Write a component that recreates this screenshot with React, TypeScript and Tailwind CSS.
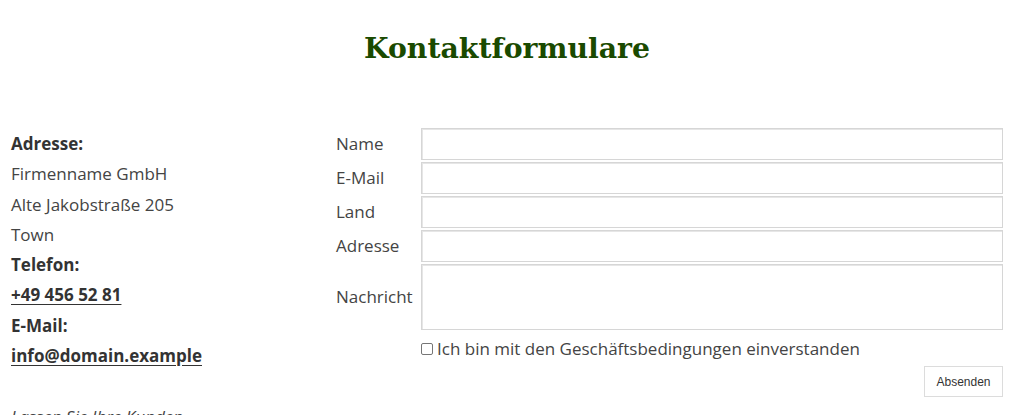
import React from "react";

export default function App() {
  const body = { fontFamily: '"Open Sans", sans-serif' };
  const rows = ["Name", "E-Mail", "Land", "Adresse"];
  return (
    <div className="w-[1024px] h-[415px] overflow-hidden bg-white text-[#444] text-[17px]" style={body}>
      <h1
        className="pt-[28px] pr-[10px] text-center text-[28.3px] font-bold leading-[40px] text-[#1a4a00]"
        style={{ fontFamily: '"DejaVu Serif", Georgia, serif' }}
      >
        Kontaktformulare
      </h1>
      <div className="mt-[60px] flex">
        <div className="w-[336px] shrink-0 pl-[11px] pt-[1px] leading-[30.3px]">
          <div className="font-bold text-[#333]">Adresse:</div>
          <div>Firmenname GmbH</div>
          <div>Alte Jakobstraße 205</div>
          <div>Town</div>
          <div className="font-bold text-[#333]">Telefon:</div>
          <div className="font-bold text-[#333] underline underline-offset-[3px]">+49 456 52 81</div>
          <div className="font-bold text-[#333]">E-Mail:</div>
          <div className="font-bold text-[#333] underline underline-offset-[3px]">info@domain.example</div>
          <div className="mt-[31px] italic">Lassen Sie Ihre Kunden</div>
        </div>
        <div className="w-[667px] shrink-0 flex flex-col gap-[2px]">
          {rows.map((r) => (
            <div key={r} className="flex items-center">
              <div className="w-[85px] shrink-0">{r}</div>
              <input className="h-[32px] flex-1 border border-[#d6d6d6] shadow-[inset_1px_1px_0_#e6e6e6] bg-white outline-none" />
            </div>
          ))}
          <div className="flex items-center">
            <div className="w-[85px] shrink-0">Nachricht</div>
            <textarea className="h-[66px] flex-1 resize-none border border-[#d6d6d6] shadow-[inset_1px_1px_0_#e6e6e6] bg-white outline-none" />
          </div>
          <div className="mt-[5px] flex items-center pl-[85px] leading-[24px]">
            <span className="mr-[4px] inline-block h-[12px] w-[12px] rounded-[2px] border border-[#767676] bg-white" />
            <span>Ich bin mit den Geschäftsbedingungen einverstanden</span>
          </div>
          <div className="mt-[3px] flex justify-end">
            <button
              className="h-[31px] w-[79px] border border-[#dcdcdc] bg-white text-[12px] text-[#333]"
              style={{ fontFamily: '"Liberation Sans", Arial, sans-serif' }}
            >
              Absenden
            </button>
          </div>
        </div>
      </div>
    </div>
  );
}
